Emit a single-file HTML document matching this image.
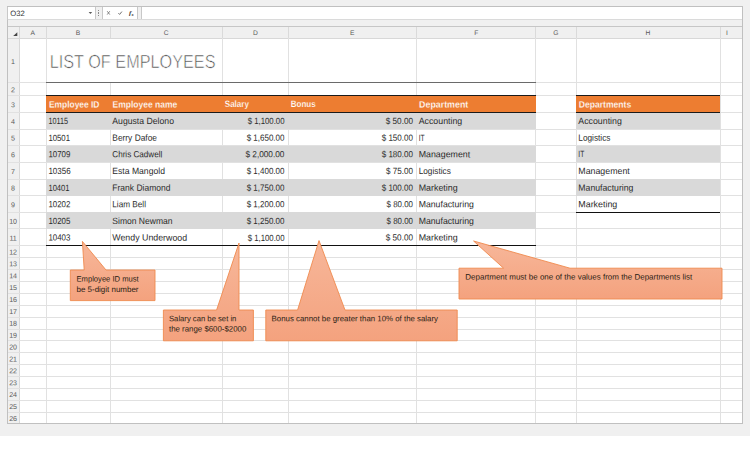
<!DOCTYPE html>
<html><head><meta charset="utf-8"><title>List of Employees</title>
<style>
html,body{margin:0;padding:0;}
body{width:750px;height:476px;overflow:hidden;background:#fff;font-family:"Liberation Sans",Arial,sans-serif;position:relative;}
#bg{position:absolute;left:0;top:0;width:750px;height:435.5px;background:#f0f0f0;}
.abs{position:absolute;}
svg text{font-family:"Liberation Sans",Arial,sans-serif;white-space:pre;}
.cell{font-size:9px;fill:#2b2b2b;}
.hd{font-size:9.2px;fill:#fff;font-weight:bold;stroke:#ed7d31;stroke-width:0.18px;}
.num{font-size:7.1px;fill:#5a5a5a;}
.ch{font-size:6.7px;fill:#5a5a5a;}
.co{font-size:7.9px;fill:#2a1d14;}
.title{font-size:18.9px;fill:#505050;stroke:#fff;stroke-width:0.6px;}
.nb{font-size:7.8px;fill:#333;}
</style></head><body>
<div id="bg"></div>
<div class="abs" style="left:6.70px;top:6.20px;width:736.00px;height:417.80px;background:#c0c0c0;"></div>
<div class="abs" style="left:7.80px;top:7.40px;width:734.10px;height:19.00px;background:#f0f0f0;"></div>
<div class="abs" style="left:7.00px;top:7.40px;width:89.20px;height:12.30px;background:#c8c8c8;"></div>
<div class="abs" style="left:7.90px;top:7.40px;width:87.40px;height:11.40px;background:#fff;"></div>
<div class="abs" style="left:101.70px;top:7.40px;width:36.30px;height:12.30px;background:#c8c8c8;"></div>
<div class="abs" style="left:102.60px;top:7.40px;width:34.50px;height:11.40px;background:#fff;"></div>
<div class="abs" style="left:140.90px;top:7.40px;width:601.60px;height:12.30px;background:#c8c8c8;"></div>
<div class="abs" style="left:141.80px;top:7.40px;width:599.80px;height:11.40px;background:#fff;"></div>
<div class="abs" style="left:7.80px;top:19.00px;width:734.10px;height:0.70px;background:#dadada;"></div>
<div class="abs" style="left:7.80px;top:25.70px;width:734.10px;height:0.90px;background:#c6c6c6;"></div>
<div class="abs" style="left:7.80px;top:26.60px;width:734.10px;height:11.20px;background:#f0f0f0;"></div>
<div class="abs" style="left:7.80px;top:37.80px;width:11.60px;height:385.20px;background:#f0f0f0;"></div>
<div class="abs" style="left:19.60px;top:37.80px;width:722.30px;height:385.20px;background:#fff;"></div>
<div class="abs" style="left:7.80px;top:37.50px;width:734.10px;height:0.80px;background:#d8d8d8;"></div>
<div class="abs" style="left:19.20px;top:26.60px;width:0.80px;height:396.40px;background:#d8d8d8;"></div>
<div class="abs" style="left:45.90px;top:26.60px;width:0.80px;height:11.00px;background:#dadada;"></div>
<div class="abs" style="left:109.60px;top:26.60px;width:0.80px;height:11.00px;background:#dadada;"></div>
<div class="abs" style="left:222.10px;top:26.60px;width:0.80px;height:11.00px;background:#dadada;"></div>
<div class="abs" style="left:287.90px;top:26.60px;width:0.80px;height:11.00px;background:#dadada;"></div>
<div class="abs" style="left:416.40px;top:26.60px;width:0.80px;height:11.00px;background:#dadada;"></div>
<div class="abs" style="left:535.20px;top:26.60px;width:0.80px;height:11.00px;background:#dadada;"></div>
<div class="abs" style="left:575.70px;top:26.60px;width:0.80px;height:11.00px;background:#dadada;"></div>
<div class="abs" style="left:719.60px;top:26.60px;width:0.80px;height:11.00px;background:#dadada;"></div>
<div class="abs" style="left:45.90px;top:38.00px;width:0.80px;height:385.00px;background:#e1e1e1;"></div>
<div class="abs" style="left:109.60px;top:82.30px;width:0.80px;height:340.70px;background:#e1e1e1;"></div>
<div class="abs" style="left:222.10px;top:38.00px;width:0.80px;height:385.00px;background:#e1e1e1;"></div>
<div class="abs" style="left:287.90px;top:38.00px;width:0.80px;height:385.00px;background:#e1e1e1;"></div>
<div class="abs" style="left:416.40px;top:38.00px;width:0.80px;height:385.00px;background:#e1e1e1;"></div>
<div class="abs" style="left:535.20px;top:38.00px;width:0.80px;height:385.00px;background:#e1e1e1;"></div>
<div class="abs" style="left:575.70px;top:38.00px;width:0.80px;height:385.00px;background:#e1e1e1;"></div>
<div class="abs" style="left:719.60px;top:38.00px;width:0.80px;height:385.00px;background:#e1e1e1;"></div>
<div class="abs" style="left:7.80px;top:81.90px;width:734.10px;height:0.80px;background:#e1e1e1;"></div>
<div class="abs" style="left:7.80px;top:95.20px;width:734.10px;height:0.80px;background:#e1e1e1;"></div>
<div class="abs" style="left:7.80px;top:111.90px;width:734.10px;height:0.80px;background:#e1e1e1;"></div>
<div class="abs" style="left:7.80px;top:128.55px;width:734.10px;height:0.80px;background:#e1e1e1;"></div>
<div class="abs" style="left:7.80px;top:145.20px;width:734.10px;height:0.80px;background:#e1e1e1;"></div>
<div class="abs" style="left:7.80px;top:161.85px;width:734.10px;height:0.80px;background:#e1e1e1;"></div>
<div class="abs" style="left:7.80px;top:178.50px;width:734.10px;height:0.80px;background:#e1e1e1;"></div>
<div class="abs" style="left:7.80px;top:195.15px;width:734.10px;height:0.80px;background:#e1e1e1;"></div>
<div class="abs" style="left:7.80px;top:211.80px;width:734.10px;height:0.80px;background:#e1e1e1;"></div>
<div class="abs" style="left:7.80px;top:228.45px;width:734.10px;height:0.80px;background:#e1e1e1;"></div>
<div class="abs" style="left:7.80px;top:245.30px;width:734.10px;height:0.80px;background:#e1e1e1;"></div>
<div class="abs" style="left:7.80px;top:257.19px;width:734.10px;height:0.80px;background:#e1e1e1;"></div>
<div class="abs" style="left:7.80px;top:269.08px;width:734.10px;height:0.80px;background:#e1e1e1;"></div>
<div class="abs" style="left:7.80px;top:280.97px;width:734.10px;height:0.80px;background:#e1e1e1;"></div>
<div class="abs" style="left:7.80px;top:292.86px;width:734.10px;height:0.80px;background:#e1e1e1;"></div>
<div class="abs" style="left:7.80px;top:304.75px;width:734.10px;height:0.80px;background:#e1e1e1;"></div>
<div class="abs" style="left:7.80px;top:316.64px;width:734.10px;height:0.80px;background:#e1e1e1;"></div>
<div class="abs" style="left:7.80px;top:328.53px;width:734.10px;height:0.80px;background:#e1e1e1;"></div>
<div class="abs" style="left:7.80px;top:340.42px;width:734.10px;height:0.80px;background:#e1e1e1;"></div>
<div class="abs" style="left:7.80px;top:352.31px;width:734.10px;height:0.80px;background:#e1e1e1;"></div>
<div class="abs" style="left:7.80px;top:364.20px;width:734.10px;height:0.80px;background:#e1e1e1;"></div>
<div class="abs" style="left:7.80px;top:376.09px;width:734.10px;height:0.80px;background:#e1e1e1;"></div>
<div class="abs" style="left:7.80px;top:387.98px;width:734.10px;height:0.80px;background:#e1e1e1;"></div>
<div class="abs" style="left:7.80px;top:399.87px;width:734.10px;height:0.80px;background:#e1e1e1;"></div>
<div class="abs" style="left:7.80px;top:411.76px;width:734.10px;height:0.80px;background:#e1e1e1;"></div>
<div class="abs" style="left:46.30px;top:112.30px;width:489.30px;height:16.65px;background:#d9d9d9;"></div>
<div class="abs" style="left:46.30px;top:145.60px;width:489.30px;height:16.65px;background:#d9d9d9;"></div>
<div class="abs" style="left:46.30px;top:178.90px;width:489.30px;height:16.65px;background:#d9d9d9;"></div>
<div class="abs" style="left:46.30px;top:212.20px;width:489.30px;height:16.65px;background:#d9d9d9;"></div>
<div class="abs" style="left:576.10px;top:112.30px;width:143.90px;height:16.65px;background:#d9d9d9;"></div>
<div class="abs" style="left:576.10px;top:145.60px;width:143.90px;height:16.65px;background:#d9d9d9;"></div>
<div class="abs" style="left:576.10px;top:178.90px;width:143.90px;height:16.65px;background:#d9d9d9;"></div>
<div class="abs" style="left:46.30px;top:95.60px;width:489.30px;height:16.70px;background:#ed7d31;"></div>
<div class="abs" style="left:576.10px;top:95.60px;width:143.90px;height:16.70px;background:#ed7d31;"></div>
<div class="abs" style="left:46.30px;top:95.00px;width:489.30px;height:1.30px;background:#1a1a1a;"></div>
<div class="abs" style="left:46.30px;top:111.60px;width:489.30px;height:1.30px;background:#1a1a1a;"></div>
<div class="abs" style="left:576.10px;top:95.00px;width:143.90px;height:1.30px;background:#1a1a1a;"></div>
<div class="abs" style="left:576.10px;top:111.60px;width:143.90px;height:1.30px;background:#1a1a1a;"></div>
<div class="abs" style="left:46.30px;top:245.00px;width:489.30px;height:1.20px;background:#111;"></div>
<div class="abs" style="left:576.10px;top:211.60px;width:143.90px;height:1.20px;background:#111;"></div>
<div class="abs" style="left:46.30px;top:81.90px;width:489.30px;height:0.90px;background:#6a6a6a;"></div>
<svg class="abs" style="left:10px;top:28px" width="10" height="10" viewBox="0 0 10 10"><path d="M7.3 4.3 L7.3 8 L3.2 8 Z" fill="#444"/></svg>
<svg class="abs" style="left:86px;top:10px" width="10" height="6" viewBox="0 0 10 6"><path d="M2.6 2.0 L6.2 2.0 L4.4 4.0 Z" fill="#5a5a5a"/></svg>
<div class="abs" style="left:98.40px;top:9.60px;width:0.90px;height:0.90px;background:#8a8a8a;"></div>
<div class="abs" style="left:98.40px;top:11.50px;width:0.90px;height:0.90px;background:#8a8a8a;"></div>
<div class="abs" style="left:98.40px;top:13.40px;width:0.90px;height:0.90px;background:#8a8a8a;"></div>
<div class="abs" style="left:98.40px;top:15.30px;width:0.90px;height:0.90px;background:#8a8a8a;"></div>
<svg class="abs" style="left:103px;top:8px" width="34" height="11" viewBox="0 0 34 11"><path d="M4.2 3.2 L6.8 6.6 M6.8 3.2 L4.2 6.6" stroke="#666" stroke-width="0.75" fill="none"/><path d="M15.4 5.2 L16.6 6.4 L18.9 3.6" stroke="#555" stroke-width="0.85" fill="none"/><text x="26.0" y="7.1" style="font-family:'Liberation Serif',serif;font-style:italic;font-weight:bold;font-size:7px" fill="#333">f</text><text x="28.5" y="7.6" style="font-weight:bold;font-size:3.8px" fill="#333">x</text></svg>
<svg class="abs" style="left:0;top:0" width="750" height="476" viewBox="0 0 750 476">
<defs><linearGradient id="cg" x1="0" y1="0" x2="0" y2="1"><stop offset="0" stop-color="#f7b79a"/><stop offset="1" stop-color="#f4a27e"/></linearGradient></defs>
<g fill="url(#cg)" stroke="#ef8a4e" stroke-width="0.9" stroke-linejoin="miter">
<path d="M70.3 270 L84.2 270 L82.4 241.4 L106 270 L155 270 L155 300.6 L70.3 300.6 Z"/>
<path d="M163.4 310 L216.6 310 L239 243 L239 310 L253.4 310 L253.4 340.8 L163.4 340.8 Z"/>
<path d="M265.8 310 L297.6 310 L319 240.6 L345 310 L457.2 310 L457.2 340.8 L265.8 340.8 Z"/>
<path d="M459 268.2 L503.6 268.2 L473.6 241 L570 268.2 L722 268.2 L722 299 L459 299 Z"/>
</g>
</svg>
<svg class="abs" style="left:0;top:0" width="750" height="476" viewBox="0 0 750 476">
<text class="ch" transform="translate(30.45,35.00) rotate(0.03)">A</text>
<text class="ch" transform="translate(75.65,35.00) rotate(0.03)">B</text>
<text class="ch" transform="translate(163.75,35.00) rotate(0.03)">C</text>
<text class="ch" transform="translate(252.90,35.00) rotate(0.03)">D</text>
<text class="ch" transform="translate(350.05,35.00) rotate(0.03)">E</text>
<text class="ch" transform="translate(474.20,35.00) rotate(0.03)">F</text>
<text class="ch" transform="translate(553.35,35.00) rotate(0.03)">G</text>
<text class="ch" transform="translate(645.55,35.00) rotate(0.03)">H</text>
<text class="ch" transform="translate(726.00,35.00) rotate(0.03)">I</text>
<text class="num" transform="translate(11.10,63.95) rotate(0.03)">1</text>
<text class="num" transform="translate(11.10,92.25) rotate(0.03)">2</text>
<text class="num" transform="translate(11.10,107.25) rotate(0.03)">3</text>
<text class="num" transform="translate(11.10,123.92) rotate(0.03)">4</text>
<text class="num" transform="translate(11.10,140.57) rotate(0.03)">5</text>
<text class="num" transform="translate(11.10,157.23) rotate(0.03)">6</text>
<text class="num" transform="translate(11.10,173.88) rotate(0.03)">7</text>
<text class="num" transform="translate(11.10,190.53) rotate(0.03)">8</text>
<text class="num" transform="translate(11.10,207.18) rotate(0.03)">9</text>
<text class="num" transform="translate(9.13,223.82) rotate(0.03)">10</text>
<text class="num" transform="translate(9.39,240.57) rotate(0.03)">11</text>
<text class="num" transform="translate(9.13,254.44) rotate(0.03)">12</text>
<text class="num" transform="translate(9.13,266.33) rotate(0.03)">13</text>
<text class="num" transform="translate(9.13,278.23) rotate(0.03)">14</text>
<text class="num" transform="translate(9.13,290.12) rotate(0.03)">15</text>
<text class="num" transform="translate(9.13,302.00) rotate(0.03)">16</text>
<text class="num" transform="translate(9.13,313.89) rotate(0.03)">17</text>
<text class="num" transform="translate(9.13,325.79) rotate(0.03)">18</text>
<text class="num" transform="translate(9.13,337.68) rotate(0.03)">19</text>
<text class="num" transform="translate(9.13,349.56) rotate(0.03)">20</text>
<text class="num" transform="translate(9.13,361.45) rotate(0.03)">21</text>
<text class="num" transform="translate(9.13,373.35) rotate(0.03)">22</text>
<text class="num" transform="translate(9.13,385.24) rotate(0.03)">23</text>
<text class="num" transform="translate(9.13,397.12) rotate(0.03)">24</text>
<text class="num" transform="translate(9.13,409.01) rotate(0.03)">25</text>
<text class="num" transform="translate(9.13,420.91) rotate(0.03)">26</text>
<text class="nb" id="nb" transform="translate(10.30,15.90) rotate(0.03) scale(0.9860,1)">O32</text>
<text class="title" id="title" transform="translate(49.74,67.50) rotate(0.03) scale(0.8598,1)">LIST OF EMPLOYEES</text>
<text class="hd" id="h1" transform="translate(48.90,107.40) rotate(0.03) scale(0.9170,1)">Employee ID</text>
<text class="hd" id="h2" transform="translate(112.50,107.40) rotate(0.03) scale(0.9263,1)">Employee name</text>
<text class="hd" id="h3" transform="translate(224.80,107.40) rotate(0.03) scale(0.8744,1)">Salary</text>
<text class="hd" id="h4" transform="translate(290.70,107.40) rotate(0.03) scale(0.8746,1)">Bonus</text>
<text class="hd" id="h5" transform="translate(419.10,107.40) rotate(0.03) scale(0.9629,1)">Department</text>
<text class="hd" id="h6" transform="translate(578.70,107.40) rotate(0.03) scale(0.9349,1)">Departments</text>
<text class="cell" id="a0" transform="translate(48.40,124.05) rotate(0.03) scale(0.8048,1)">10115</text>
<text class="cell" id="b0" transform="translate(112.30,124.05) rotate(0.03) scale(0.9635,1)">Augusta Delono</text>
<text class="cell" id="c0" transform="translate(247.70,124.05) rotate(0.03) scale(0.8652,1)">$ 1,100.00</text>
<text class="cell" id="d0" transform="translate(385.80,124.05) rotate(0.03) scale(0.9060,1)">$ 50.00</text>
<text class="cell" id="e0" transform="translate(418.70,124.05) rotate(0.03) scale(0.9792,1)">Accounting</text>
<text class="cell" id="a1" transform="translate(48.40,140.70) rotate(0.03) scale(0.8633,1)">10501</text>
<text class="cell" id="b1" transform="translate(112.30,140.70) rotate(0.03) scale(0.9310,1)">Berry Dafoe</text>
<text class="cell" id="c1" transform="translate(246.70,140.70) rotate(0.03) scale(0.8887,1)">$ 1,650.00</text>
<text class="cell" id="d1" transform="translate(381.70,140.70) rotate(0.03) scale(0.8936,1)">$ 150.00</text>
<text class="cell" id="e1" transform="translate(418.70,140.70) rotate(0.03) scale(0.7411,1)">IT</text>
<text class="cell" id="a2" transform="translate(48.40,157.35) rotate(0.03) scale(0.8792,1)">10709</text>
<text class="cell" id="b2" transform="translate(112.30,157.35) rotate(0.03) scale(0.9024,1)">Chris Cadwell</text>
<text class="cell" id="c2" transform="translate(245.40,157.35) rotate(0.03) scale(0.9193,1)">$ 2,000.00</text>
<text class="cell" id="d2" transform="translate(381.70,157.35) rotate(0.03) scale(0.8936,1)">$ 180.00</text>
<text class="cell" id="e2" transform="translate(418.70,157.35) rotate(0.03) scale(0.9805,1)">Management</text>
<text class="cell" id="a3" transform="translate(48.40,174.00) rotate(0.03) scale(0.8872,1)">10356</text>
<text class="cell" id="b3" transform="translate(112.30,174.00) rotate(0.03) scale(0.9577,1)">Esta Mangold</text>
<text class="cell" id="c3" transform="translate(246.70,174.00) rotate(0.03) scale(0.8887,1)">$ 1,400.00</text>
<text class="cell" id="d3" transform="translate(386.00,174.00) rotate(0.03) scale(0.8993,1)">$ 75.00</text>
<text class="cell" id="e3" transform="translate(418.70,174.00) rotate(0.03) scale(0.9179,1)">Logistics</text>
<text class="cell" id="a4" transform="translate(48.40,190.65) rotate(0.03) scale(0.8473,1)">10401</text>
<text class="cell" id="b4" transform="translate(112.30,190.65) rotate(0.03) scale(0.9444,1)">Frank Diamond</text>
<text class="cell" id="c4" transform="translate(246.70,190.65) rotate(0.03) scale(0.8887,1)">$ 1,750.00</text>
<text class="cell" id="d4" transform="translate(381.70,190.65) rotate(0.03) scale(0.8936,1)">$ 100.00</text>
<text class="cell" id="e4" transform="translate(418.70,190.65) rotate(0.03) scale(0.9871,1)">Marketing</text>
<text class="cell" id="a5" transform="translate(48.40,207.30) rotate(0.03) scale(0.8792,1)">10202</text>
<text class="cell" id="b5" transform="translate(112.30,207.30) rotate(0.03) scale(0.9104,1)">Liam Bell</text>
<text class="cell" id="c5" transform="translate(246.70,207.30) rotate(0.03) scale(0.8887,1)">$ 1,200.00</text>
<text class="cell" id="d5" transform="translate(386.60,207.30) rotate(0.03) scale(0.8793,1)">$ 80.00</text>
<text class="cell" id="e5" transform="translate(418.70,207.30) rotate(0.03) scale(0.9680,1)">Manufacturing</text>
<text class="cell" id="a6" transform="translate(48.40,223.95) rotate(0.03) scale(0.8792,1)">10205</text>
<text class="cell" id="b6" transform="translate(112.30,223.95) rotate(0.03) scale(0.9493,1)">Simon Newman</text>
<text class="cell" id="c6" transform="translate(246.70,223.95) rotate(0.03) scale(0.8887,1)">$ 1,250.00</text>
<text class="cell" id="d6" transform="translate(386.60,223.95) rotate(0.03) scale(0.8793,1)">$ 80.00</text>
<text class="cell" id="e6" transform="translate(418.70,223.95) rotate(0.03) scale(0.9680,1)">Manufacturing</text>
<text class="cell" id="a7" transform="translate(48.40,240.60) rotate(0.03) scale(0.8792,1)">10403</text>
<text class="cell" id="b7" transform="translate(112.30,240.60) rotate(0.03) scale(0.9807,1)">Wendy Underwood</text>
<text class="cell" id="c7" transform="translate(247.70,240.60) rotate(0.03) scale(0.8652,1)">$ 1,100.00</text>
<text class="cell" id="d7" transform="translate(385.80,240.60) rotate(0.03) scale(0.9060,1)">$ 50.00</text>
<text class="cell" id="e7" transform="translate(418.70,240.60) rotate(0.03) scale(0.9871,1)">Marketing</text>
<text class="cell" id="p0" transform="translate(578.30,124.05) rotate(0.03) scale(0.9792,1)">Accounting</text>
<text class="cell" id="p1" transform="translate(578.30,140.70) rotate(0.03) scale(0.9179,1)">Logistics</text>
<text class="cell" id="p2" transform="translate(578.30,157.35) rotate(0.03) scale(0.7411,1)">IT</text>
<text class="cell" id="p3" transform="translate(578.30,174.00) rotate(0.03) scale(0.9805,1)">Management</text>
<text class="cell" id="p4" transform="translate(578.30,190.65) rotate(0.03) scale(0.9680,1)">Manufacturing</text>
<text class="cell" id="p5" transform="translate(578.30,207.30) rotate(0.03) scale(0.9871,1)">Marketing</text>
<text class="co" id="k1" transform="translate(76.50,281.50) rotate(0.03) scale(0.9652,1)">Employee ID must</text>
<text class="co" id="k2" transform="translate(76.50,292.00) rotate(0.03) scale(1.0101,1)">be 5-digit number</text>
<text class="co" id="k3" transform="translate(169.00,321.20) rotate(0.03) scale(0.9722,1)">Salary can be set in</text>
<text class="co" id="k4" transform="translate(169.00,331.50) rotate(0.03) scale(0.9953,1)">the range $600-$2000</text>
<text class="co" id="k5" transform="translate(271.60,321.20) rotate(0.03) scale(0.9953,1)">Bonus cannot be greater than 10% of the salary</text>
<text class="co" id="k6" transform="translate(465.30,279.50) rotate(0.03) scale(1.0128,1)">Department must be one of the values from the Departments list</text>
</svg>
</body></html>
